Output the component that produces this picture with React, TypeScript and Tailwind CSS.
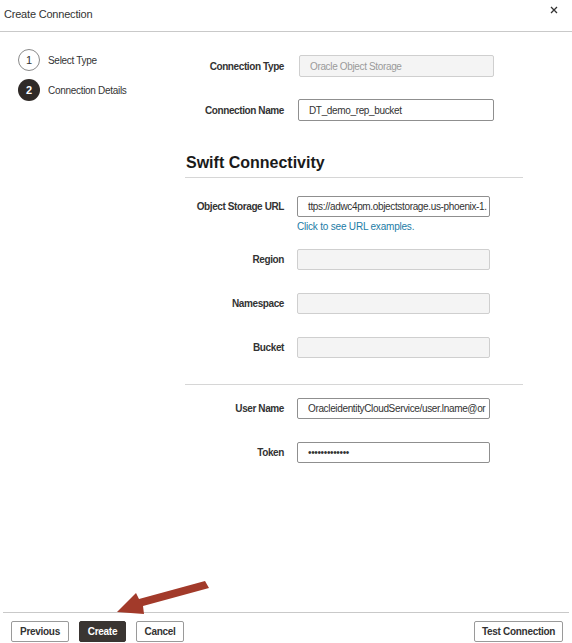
import type { ReactNode } from "react";

const font = { fontFamily: '"Liberation Sans", Arial, sans-serif' };

function Label({ children }: { children: ReactNode }) {
  return (
    <div className="w-[99px] shrink-0 text-right text-[10px] font-bold tracking-[-0.4px] text-[#333]">
      {children}
    </div>
  );
}

function Field({
  label,
  value,
  disabled,
  placeholder,
  gap = "gap-[13px]",
  width = "w-[193px]",
  height = "h-[21px]",
}: {
  label: string;
  value?: string;
  disabled?: boolean;
  placeholder?: string;
  gap?: string;
  width?: string;
  height?: string;
}) {
  return (
    <div className={`flex items-center ${gap}`}>
      <Label>{label}</Label>
      <div
        className={`flex ${height} ${width} items-center overflow-hidden whitespace-nowrap rounded-[2px] border pl-[10px] pr-[2px] text-[10px] tracking-[-0.35px] ${
          disabled
            ? "border-[#cfcfcf] bg-[#f4f4f4] text-[#9a9a9a]"
            : "border-[#8f8f8f] bg-white text-[#333]"
        }`}
      >
        {value ?? placeholder}
      </div>
    </div>
  );
}

function Button({ children, dark, width }: { children: ReactNode; dark?: boolean; width: string }) {
  return (
    <button
      className={`flex h-[21px] ${width} items-center justify-center rounded-[2px] border text-[10px] font-bold tracking-[-0.3px] ${
        dark ? "border-[#3a3532] bg-[#3a3532] text-white" : "border-[#9a9a9a] bg-white text-[#333]"
      }`}
    >
      {children}
    </button>
  );
}

export default function App() {
  return (
    <div className="relative flex h-[643px] w-[572px] flex-col bg-white" style={font}>
      {/* header */}
      <div className="flex h-[32px] shrink-0 items-start justify-between border-b border-[#c9c9c9] pl-[4px] pr-[14px] pt-[7px]">
        <span className="text-[11px] leading-[14px] tracking-[-0.2px] text-[#333]">Create Connection</span>
        <svg width="8" height="8" viewBox="0 0 8 8" className="mt-[-1px]">
          <path d="M1 1L7 7M7 1L1 7" stroke="#333" strokeWidth="1.3" />
        </svg>
      </div>

      {/* body */}
      <div className="flex flex-1">
        <div className="flex w-[185px] shrink-0 flex-col gap-[8px] pl-[18px] pt-[17px]">
          <div className="flex items-center gap-[8px]">
            <div className="flex h-[22px] w-[22px] items-center justify-center rounded-full border-[1.5px] border-[#8a8a8a] text-[11px] text-[#333]">
              1
            </div>
            <span className="text-[10px] tracking-[-0.3px] text-[#333]">Select Type</span>
          </div>
          <div className="flex items-center gap-[8px]">
            <div className="flex h-[22px] w-[22px] items-center justify-center rounded-full bg-[#2f2a27] text-[11px] font-bold text-white">
              2
            </div>
            <span className="text-[10px] tracking-[-0.3px] text-[#333]">Connection Details</span>
          </div>
        </div>

        <div className="flex w-[338px] flex-col pt-[23px]">
          <div className="flex flex-col gap-[22px]">
            <Field label="Connection Type" placeholder="Oracle Object Storage" disabled gap="gap-[15px]" width="w-[195px]" height="h-[22px]" />
            <Field label="Connection Name" value="DT_demo_rep_bucket" gap="gap-[14px]" width="w-[196px]" height="h-[22px]" />
          </div>

          <h2 className="mt-[32px] border-b border-[#d6d6d6] pb-[4px] pl-[1px] text-[16px] font-bold leading-[20px] text-[#1a1a1a]">
            Swift Connectivity
          </h2>

          <div className="mt-[18px]">
            <Field label="Object Storage URL" value="ttps://adwc4pm.objectstorage.us-phoenix-1." />
          </div>
          <div className="mt-[4px] pl-[112px] text-[10px] leading-[12px] tracking-[-0.2px] text-[#1b7ca6]">
            Click to see URL examples.
          </div>

          <div className="mt-[16px] flex flex-col gap-[23px] border-b border-[#d6d6d6] pb-[26px]">
            <Field label="Region" disabled />
            <Field label="Namespace" disabled />
            <Field label="Bucket" disabled />
          </div>

          <div className="mt-[13px] flex flex-col gap-[23px]">
            <Field label="User Name" value="OracleidentityCloudService/user.lname@or" />
            <Field label="Token" value="•••••••••••••" />
          </div>
        </div>
      </div>

      {/* footer */}
      <div className="mx-[3px] flex h-[31px] shrink-0 items-start justify-between border-t border-[#c9c9c9] pl-[8px] pr-[6px] pt-[8px]">
        <div className="flex gap-[10px]">
          <Button width="w-[58px]">Previous</Button>
          <Button width="w-[47px]" dark>
            Create
          </Button>
          <Button width="w-[48px]">Cancel</Button>
        </div>
        <Button width="w-[89px]">Test Connection</Button>
      </div>

      {/* annotation arrow */}
      <svg className="pointer-events-none absolute left-0 top-0" width="572" height="643">
        <polygon
          points="205,581 209,588 143,606 144,614 117,612 136,593 139,599"
          fill="#a23a2a"
        />
      </svg>
    </div>
  );
}
